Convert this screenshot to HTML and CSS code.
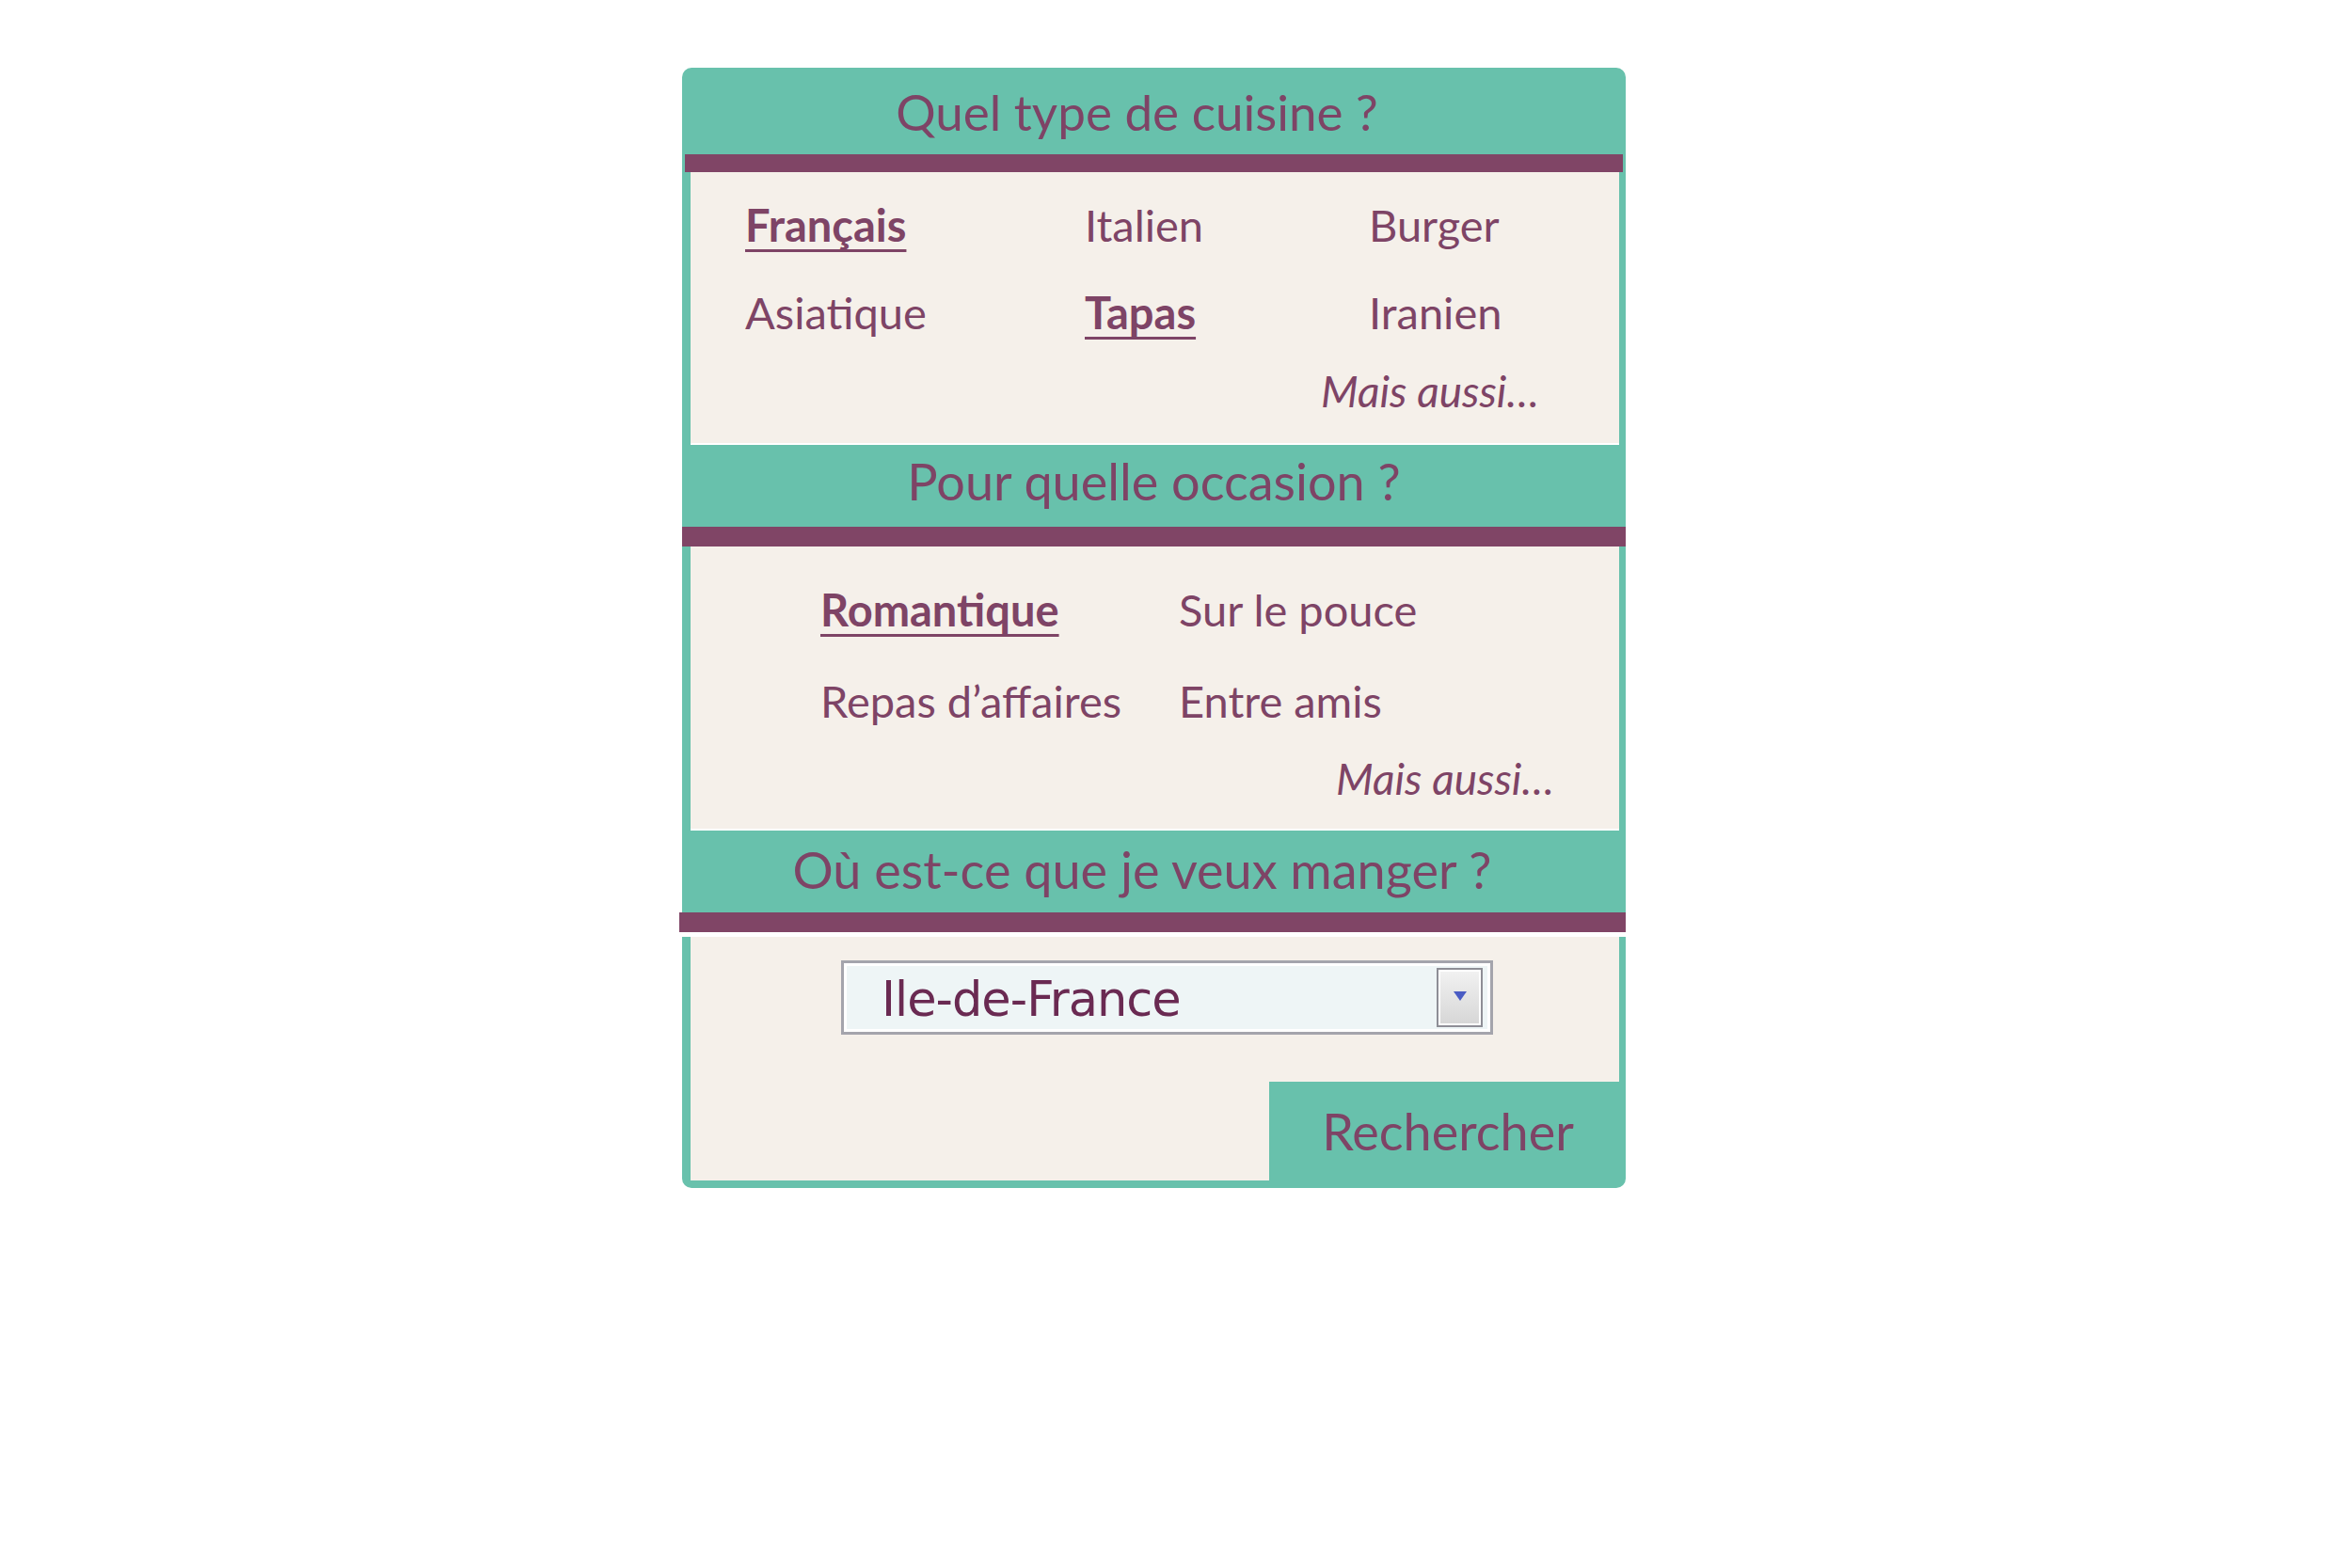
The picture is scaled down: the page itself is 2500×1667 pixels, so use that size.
FILE: index.html
```html
<!DOCTYPE html>
<html lang="fr">
<head>
<meta charset="utf-8">
<title>Recherche</title>
<link rel="stylesheet" href="styles.css">
</head>
<body>
<div class="panel">
  <div class="head head-1">Quel type de cuisine ?</div>
  <div class="bar bar-1"></div>
  <div class="cream cream-1">
    <div class="grid grid-1">
      <span class="opt sel">Français</span>
      <span class="opt">Italien</span>
      <span class="opt">Burger</span>
      <span class="opt">Asiatique</span>
      <span class="opt sel">Tapas</span>
      <span class="opt">Iranien</span>
    </div>
    <div class="more more-1">Mais aussi…</div>
  </div>

  <div class="head head-2">Pour quelle occasion ?</div>
  <div class="bar bar-2"></div>
  <div class="cream cream-2">
    <div class="grid grid-2">
      <span class="opt sel">Romantique</span>
      <span class="opt">Sur le pouce</span>
      <span class="opt">Repas d’affaires</span>
      <span class="opt">Entre amis</span>
    </div>
    <div class="more more-2">Mais aussi…</div>
  </div>

  <div class="head head-3">Où est-ce que je veux manger ?</div>
  <div class="bar bar-3"></div>
  <div class="cream cream-3">
    <div class="select">
      <span class="select-text">Ile-de-France</span>
      <span class="select-btn"><span class="tri"></span></span>
    </div>
    <div class="actions">
      <div class="search">Rechercher</div>
    </div>
  </div>
</div>
</body>
</html>
```

FILE: styles.css
```css
html, body {
  margin: 0;
  padding: 0;
  background: #ffffff;
}

body {
  font-family: Lato, "Open Sans", sans-serif;
  color: #7e4466;
}

.panel {
  width: 1003px;
  margin: 72px 0 0 725px;
  background: #68c1ac;
  border-radius: 10px;
  padding-bottom: 8px;
  display: flex;
  flex-direction: column;
}

.head {
  box-sizing: border-box;
  font-size: 54px;
  line-height: 1.2;
  text-align: center;
  color: #7e4466;
  white-space: nowrap;
}

.head-1 { height: 92px; padding-top: 15px; padding-right: 36px; font-size: 53px; }
.head-2 { height: 87px; padding-top: 7px; }
.head-3 { height: 87px; padding-top: 10px; padding-right: 25px; }

.bar {
  height: 19px;
  background: #804566;
}

.bar-1 { margin: 0 3px 0 3px; }
.bar-2 { height: 21px; margin: 0; }
.bar-3 { height: 21px; margin: 0 0 0 -3px; border-bottom: 5px solid #ffffff; }

.cream {
  background: #f5f0ea;
  margin: 0 7px 0 9px;
  box-sizing: border-box;
}

.cream-1 {
  height: 290px;
  padding: 28px 0 0 58px;
  border-bottom: 2px solid #ffffff;
}

.cream-2 {
  height: 302px;
  padding: 39px 0 0 138px;
  border-bottom: 2px solid #ffffff;
}

.cream-3 {
  height: 259px;
  padding-top: 25px;
  display: flex;
  flex-direction: column;
}

.grid {
  display: grid;
}

.grid-1 {
  grid-template-columns: 361px 302px auto;
  row-gap: 37px;
}

.grid-2 {
  grid-template-columns: 381px auto;
  row-gap: 41px;
}

.opt {
  font-size: 47px;
  line-height: 1.2;
  white-space: nowrap;
  justify-self: start;
}

.sel {
  font-weight: 700;
  text-decoration: underline;
  text-decoration-thickness: 3px;
  text-underline-offset: 8px;
  text-decoration-skip-ink: none;
}

.more {
  font-size: 46px;
  line-height: 1.2;
  font-style: italic;
  white-space: nowrap;
}

.more-1 { margin: 27px 0 0 612px; }
.more-2 { margin: 26px 0 0 548px; }

.select {
  box-sizing: border-box;
  width: 693px;
  height: 79px;
  margin-left: 160px;
  border: 3px solid #a4a4ac;
  box-shadow: inset 0 0 0 3px #ffffff;
  background: #eef5f6;
  display: flex;
  align-items: center;
  justify-content: space-between;
  padding: 0 8px 0 40px;
}

.select-text {
  font-family: "DejaVu Sans", Verdana, sans-serif;
  font-size: 51px;
  letter-spacing: -1px;
  color: #6a2a52;
  line-height: 1;
  padding-top: 4px;
}

.select-btn {
  box-sizing: border-box;
  width: 49px;
  height: 63px;
  border: 2px solid #8e8e96;
  box-shadow: inset 0 0 0 2px #ffffff;
  background: linear-gradient(#f2f2f2, #d6d6d6);
  display: flex;
  align-items: center;
  justify-content: center;
}

.tri {
  width: 0;
  height: 0;
  border-left: 7px solid transparent;
  border-right: 7px solid transparent;
  border-top: 10px solid #4a5cc4;
  margin-bottom: 4px;
}

.actions {
  margin-top: auto;
  display: flex;
  justify-content: flex-end;
}

.search {
  box-sizing: border-box;
  width: 372px;
  height: 105px;
  background: #68c1ac;
  font-size: 54px;
  line-height: 1.2;
  text-align: center;
  padding: 21px 0 0 8px;
  white-space: nowrap;
}
```
